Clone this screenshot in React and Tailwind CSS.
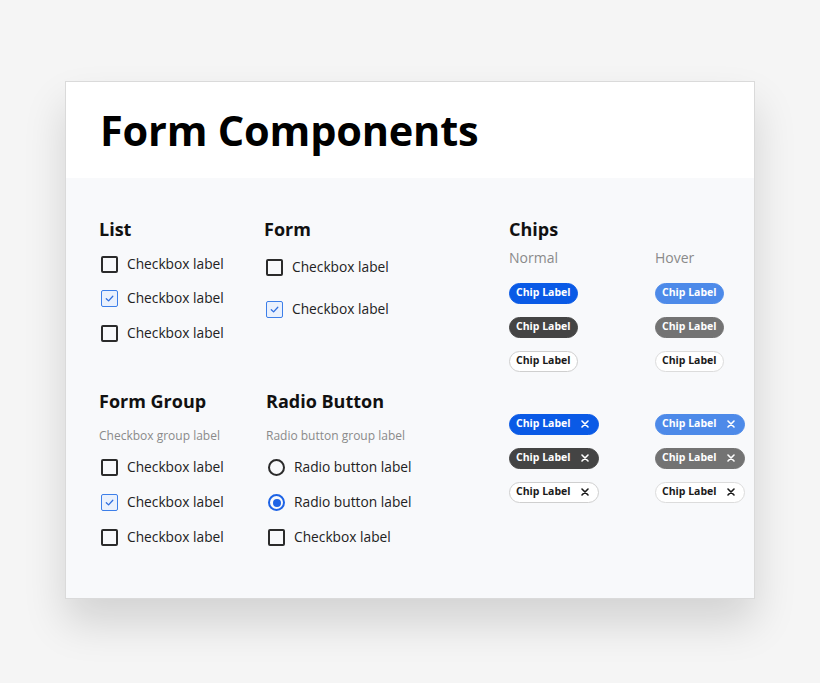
import React from 'react'

const font = { fontFamily: '"Open Sans", "Noto Sans", sans-serif' }

function Checkbox({ checked }) {
  if (checked) {
    return (
      <span className="flex h-[17px] w-[17px] shrink-0 items-center justify-center rounded-[2px] border-[1.5px] border-[#3d7fe9] bg-[#eaf1fd]">
        <svg width="11" height="11" viewBox="0 0 12 12" fill="none">
          <path d="M2.5 6.2 L5 8.6 L9.6 3.6" stroke="#2f6fe0" strokeWidth="1.4" strokeLinecap="round" strokeLinejoin="round" />
        </svg>
      </span>
    )
  }
  return <span className="block h-[17px] w-[17px] shrink-0 rounded-[2px] border-2 border-[#2b2b2b]" />
}

function Radio({ checked }) {
  if (checked) {
    return (
      <span className="flex h-[17px] w-[17px] shrink-0 items-center justify-center rounded-full border-2 border-[#1d63e6]">
        <span className="block h-[8px] w-[8px] rounded-full bg-[#1d63e6]" />
      </span>
    )
  }
  return <span className="block h-[17px] w-[17px] shrink-0 rounded-full border-2 border-[#2b2b2b]" />
}

function Row({ h, children, label }) {
  return (
    <div className={`flex items-center gap-[9px] pl-[2px] ${h}`}>
      {children}
      <span className="text-[13.75px] text-[#222]">{label}</span>
    </div>
  )
}

function Heading({ children }) {
  return <h2 className="h-6 text-[18px] font-bold leading-6 text-[#111]">{children}</h2>
}

function SubLabel({ children }) {
  return <p className="mt-[14px] h-[18px] text-[12px] leading-[18px] text-[#8a8a8a]">{children}</p>
}

const chipStyles = {
  blue: 'bg-[#0a5ae6] text-white border-[#0a5ae6]',
  dark: 'bg-[#444444] text-white border-[#444444]',
  light: 'bg-white text-[#1a1a1a] border-[#cfcfcf]',
  blueHover: 'bg-[#4d8ae9] text-white border-[#4d8ae9]',
  darkHover: 'bg-[#737373] text-white border-[#737373]',
  lightHover: 'bg-white text-[#1a1a1a] border-[#dcdcdc]',
}

function Chip({ kind, close }) {
  return (
    <span className={`inline-flex h-[21px] items-center rounded-full border text-[10.5px] font-bold ${chipStyles[kind]} ${close ? 'gap-[10px] pl-[6px] pr-[9px]' : 'px-[6px]'}`}>
      Chip Label
      {close && (
        <svg width="8" height="8" viewBox="0 0 8 8">
          <path d="M1 1 L7 7 M7 1 L1 7" stroke="currentColor" strokeWidth="1.6" strokeLinecap="round" />
        </svg>
      )}
    </span>
  )
}

function ChipRows({ kinds, close }) {
  return (
    <div className="flex flex-col">
      {kinds.map((k) => (
        <div key={k} className="flex h-[34px] items-center">
          <Chip kind={k} close={close} />
        </div>
      ))}
    </div>
  )
}

export default function App() {
  return (
    <div className="min-h-screen bg-[#f5f5f5] pt-[81px]" style={font}>
      <div className="mx-auto w-[690px] border border-[#dadada] shadow-[0_24px_40px_rgba(0,0,0,0.14)]">
        <div className="flex h-[96px] items-center bg-white pl-[34px]">
          <h1 className="text-[41.5px] font-bold tracking-[-0.2px] text-black">Form Components</h1>
        </div>

        <div className="flex h-[420px] bg-[#f8f9fb] pl-[33px] pt-[39px]">
          <div className="flex flex-col">
            <div className="flex h-[172px]">
              <div className="w-[165px]">
                <Heading>List</Heading>
                <div className="mt-[6px]">
                  <Row h="h-[34.5px]" label="Checkbox label"><Checkbox /></Row>
                  <Row h="h-[34.5px]" label="Checkbox label"><Checkbox checked /></Row>
                  <Row h="h-[34.5px]" label="Checkbox label"><Checkbox /></Row>
                </div>
              </div>
              <div className="w-[245px]">
                <Heading>Form</Heading>
                <div className="mt-[5px]">
                  <Row h="h-[42px]" label="Checkbox label"><Checkbox /></Row>
                  <Row h="h-[42px]" label="Checkbox label"><Checkbox checked /></Row>
                </div>
              </div>
            </div>

            <div className="flex">
              <div className="w-[167px]">
                <Heading>Form Group</Heading>
                <SubLabel>Checkbox group label</SubLabel>
                <div className="mt-[5px]">
                  <Row h="h-[35px]" label="Checkbox label"><Checkbox /></Row>
                  <Row h="h-[35px]" label="Checkbox label"><Checkbox checked /></Row>
                  <Row h="h-[35px]" label="Checkbox label"><Checkbox /></Row>
                </div>
              </div>
              <div className="w-[243px]">
                <Heading>Radio Button</Heading>
                <SubLabel>Radio button group label</SubLabel>
                <div className="mt-[5px]">
                  <Row h="h-[35px]" label="Radio button label"><Radio /></Row>
                  <Row h="h-[35px]" label="Radio button label"><Radio checked /></Row>
                  <Row h="h-[35px]" label="Checkbox label"><Checkbox /></Row>
                </div>
              </div>
            </div>
          </div>

          <div className="flex flex-col">
            <Heading>Chips</Heading>
            <div className="mt-[7px] flex h-[20px] text-[14px] leading-[20px] text-[#8a8a8a]">
              <span className="w-[146px]">Normal</span>
              <span>Hover</span>
            </div>
            <div className="mt-[8px] flex">
              <div className="w-[146px]">
                <ChipRows kinds={['blue', 'dark', 'light']} />
              </div>
              <ChipRows kinds={['blueHover', 'darkHover', 'lightHover']} />
            </div>
            <div className="mt-[29px] flex">
              <div className="w-[146px]">
                <ChipRows kinds={['blue', 'dark', 'light']} close />
              </div>
              <ChipRows kinds={['blueHover', 'darkHover', 'lightHover']} close />
            </div>
          </div>
        </div>
      </div>
    </div>
  )
}
